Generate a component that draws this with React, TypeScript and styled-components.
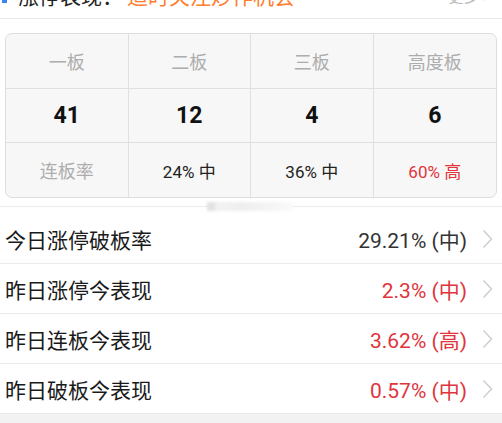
import styled, { createGlobalStyle } from 'styled-components';

const GlobalStyle = createGlobalStyle`
  html, body {
    margin: 0;
    padding: 0;
    background: #ffffff;
  }
  body {
    font-family: Roboto, "Noto Sans CJK SC", "Noto Sans", sans-serif;
    overflow: hidden;
  }
`;

const Page = styled.div`
  width: 502px;
  height: 423px;
  display: flex;
  flex-direction: column;
  background: #ffffff;
  overflow: hidden;
`;

const TopBar = styled.header`
  height: 18px;
  flex-shrink: 0;
  overflow: hidden;
  border-bottom: 1px solid #ebebeb;
`;

const TopLine = styled.div`
  display: flex;
  align-items: center;
  height: 24px;
  margin-top: -15px;
  padding: 0 12px 0 2px;
  font-size: 21px;
  line-height: 24px;
`;

const Marker = styled.span`
  width: 5px;
  height: 5px;
  margin-top: 6px;
  margin-right: 11px;
  background: #3a86f0;
`;

const TopLabel = styled.span`
  color: #222222;
`;

const TopValue = styled.span`
  color: #ff7d2e;
  margin-left: 4px;
  flex: 1;
`;

const More = styled.span`
  color: #bbbbbb;
  font-size: 15px;
`;

const Board = styled.div`
  margin: 14px 5px 0;
  display: grid;
  grid-template-columns: repeat(4, 1fr);
  grid-template-rows: 55px 54px 54px;
  flex-shrink: 0;
  border: 1px solid #dedede;
  border-radius: 7px;
  background: #f7f7f7;
  overflow: hidden;
`;

const Cell = styled.div<{ $tone?: 'label' | 'num' | 'plain' | 'red'; $last?: boolean; $bottom?: boolean }>`
  display: flex;
  align-items: center;
  justify-content: center;
  border-right: ${(p) => (p.$last ? 'none' : '1px solid #e0e0e0')};
  border-bottom: ${(p) => (p.$bottom ? 'none' : '1px solid #e0e0e0')};
  font-size: ${(p) => (p.$tone === 'num' ? '23px' : p.$tone === 'label' ? '18px' : '17px')};
  font-weight: ${(p) => (p.$tone === 'num' ? 700 : 400)};
  color: ${(p) =>
    p.$tone === 'label' ? '#adadad' : p.$tone === 'red' ? '#e0353c' : p.$tone === 'num' ? '#111111' : '#222222'};
`;

const Divider = styled.div`
  position: relative;
  height: 16px;
  display: flex;
  align-items: center;
  flex-shrink: 0;
  &::before {
    content: '';
    flex: 1;
    height: 1px;
    background: #ececec;
  }
`;

const Watermark = styled.span`
  position: absolute;
  left: 207px;
  top: 4px;
  width: 86px;
  height: 9px;
  background: linear-gradient(90deg, #e2e2e2 0 8%, #f3f3f3 12%, #eeeeee 40%, #f4f4f4 70%, #fafafa 100%);
  filter: blur(1.5px);
`;

const List = styled.div`
  display: flex;
  flex-direction: column;
  flex-shrink: 0;
`;

const Row = styled.div`
  height: 49px;
  display: flex;
  align-items: center;
  padding: 0 9px 0 5px;
  border-bottom: 1px solid #ebebeb;
  font-size: 21px;
`;

const RowLabel = styled.span`
  flex: 1;
  color: #1a1a1a;
`;

const RowValue = styled.span<{ $red?: boolean }>`
  color: ${(p) => (p.$red ? '#e0353c' : '#333333')};
  margin-right: 15px;
`;

const Footer = styled.div`
  flex: 1;
  background: #f2f2f2;
`;

const Chevron = () => (
  <svg width="11" height="20" viewBox="0 0 11 20" fill="none">
    <path d="M1.5 1.5 L9.5 10 L1.5 18.5" stroke="#cccccc" strokeWidth="1.4" />
  </svg>
);

const heads = ['一板', '二板', '三板', '高度板'];
const nums = ['41', '12', '4', '6'];
const rates: { text: string; tone: 'label' | 'plain' | 'red' }[] = [
  { text: '连板率', tone: 'label' },
  { text: '24% 中', tone: 'plain' },
  { text: '36% 中', tone: 'plain' },
  { text: '60% 高', tone: 'red' },
];

const rows = [
  { label: '今日涨停破板率', value: '29.21% (中)', red: false },
  { label: '昨日涨停今表现', value: '2.3% (中)', red: true },
  { label: '昨日连板今表现', value: '3.62% (高)', red: true },
  { label: '昨日破板今表现', value: '0.57% (中)', red: true },
];

export default function App() {
  return (
    <Page>
      <GlobalStyle />
      <TopBar>
        <TopLine>
          <Marker />
          <TopLabel>涨停表现：</TopLabel>
          <TopValue>适时关注炒作机会</TopValue>
          <More>更多 &gt;</More>
        </TopLine>
      </TopBar>
      <Board>
        {heads.map((h, i) => (
          <Cell key={h} $tone="label" $last={i === 3}>
            {h}
          </Cell>
        ))}
        {nums.map((n, i) => (
          <Cell key={i} $tone="num" $last={i === 3}>
            {n}
          </Cell>
        ))}
        {rates.map((r, i) => (
          <Cell key={r.text} $tone={r.tone} $last={i === 3} $bottom>
            {r.text}
          </Cell>
        ))}
      </Board>
      <Divider>
        <Watermark />
      </Divider>
      <List>
        {rows.map((r) => (
          <Row key={r.label}>
            <RowLabel>{r.label}</RowLabel>
            <RowValue $red={r.red}>{r.value}</RowValue>
            <Chevron />
          </Row>
        ))}
      </List>
      <Footer />
    </Page>
  );
}
